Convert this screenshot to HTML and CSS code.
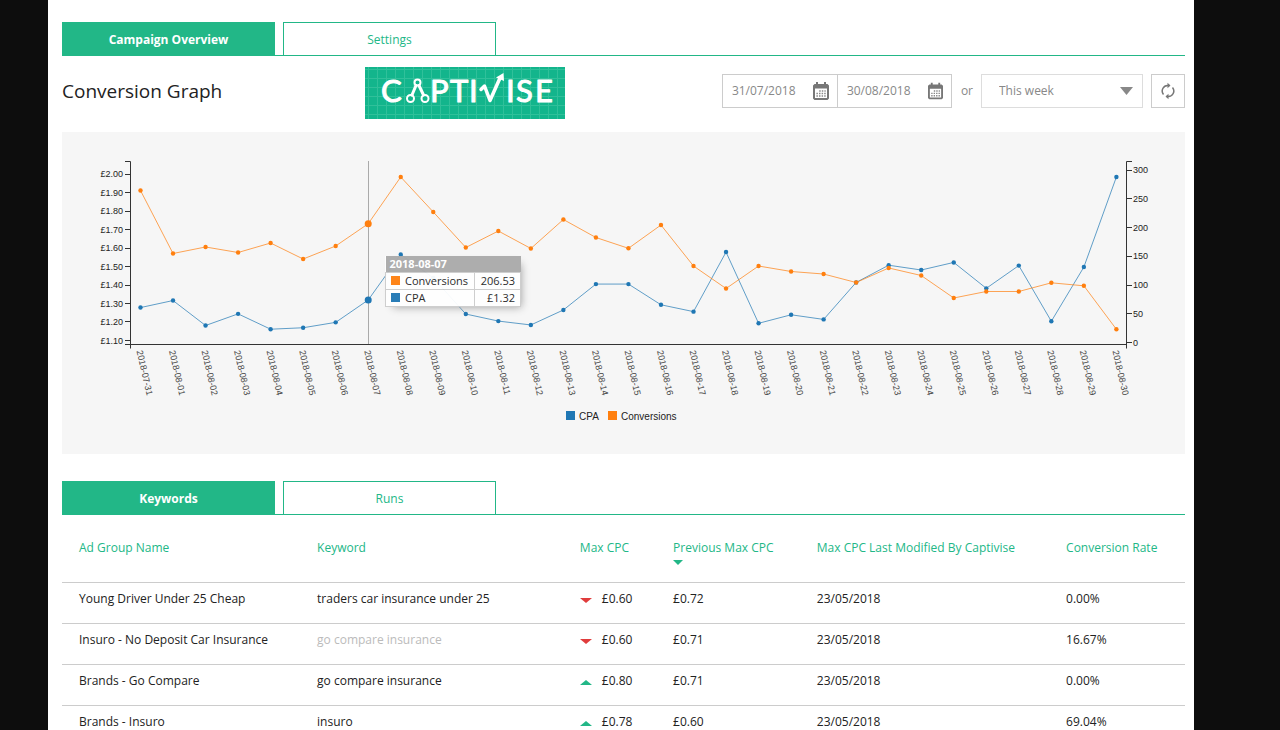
FILE: index.html
```html
<!DOCTYPE html>
<html lang="en">
  <head>
    <meta charset="UTF-8" />
    <meta name="viewport" content="width=device-width, initial-scale=1.0" />
    <title>Captivise - Campaign Overview</title>
    <link rel="stylesheet" href="styles.css">
  </head>
  <body>
    <main class="page">
      <nav class="tabs">
        <button class="tab active" type="button">Campaign Overview</button>
        <button class="tab" type="button">Settings</button>
      </nav>

      <header class="graph-header">
        <h1>Conversion Graph</h1>
        <svg class="logo" width="200" height="52" viewBox="0 0 200 52" role="img" aria-label="Captivise">
          <defs>
            <pattern id="grid" width="9" height="9" patternUnits="userSpaceOnUse">
              <path d="M3.500 0v9M0 2.500h9" stroke="#3cc4a0" stroke-width="1" fill="none" />
            </pattern>
          </defs>
          <rect width="200" height="52" fill="#13b58c" />
          <rect width="200" height="52" fill="url(#grid)" opacity="0.7" />
          <text class="logo-text" y="35" x="16 65 85 104 141 151 170">CPTIISE</text>
          <g fill="none" stroke="#fff" stroke-width="2" stroke-linecap="round" stroke-linejoin="round">
            <circle cx="52.5" cy="15.5" r="3" />
            <circle cx="45.5" cy="31.5" r="3.500" />
            <circle cx="60" cy="31.5" r="3.500" />
            <path d="M51 18.5L47 28M54 18.5L58.5 28" stroke-width="3" />
          </g>
          <path d="M116 22.500L119.500 19L125 33.500L135 11" fill="none" stroke="#fff" stroke-width="3.500" stroke-linecap="round" stroke-linejoin="round" />
          <path d="M131 10.500L138.500 6L139 14z" fill="#fff" />
        </svg>
        <form class="filters">
          <div class="date-range">
            <label class="date">
              <input type="text" value="31/07/2018" aria-label="Start date">
              <svg width="16" height="18" viewBox="0 0 16 18"><use href="#calendar" /></svg>
            </label>
            <label class="date">
              <input type="text" value="30/08/2018" aria-label="End date">
              <svg width="16" height="18" viewBox="0 0 16 18"><use href="#calendar" /></svg>
            </label>
          </div>
          <span class="or">or</span>
          <div class="period">
            <select aria-label="Period">
              <option>This week</option>
            </select>
            <svg width="13" height="8" viewBox="0 0 13 8"><path d="M0 0h13L6.500 8z" fill="#888" /></svg>
          </div>
          <button class="refresh" type="button" aria-label="Refresh">
            <svg width="14" height="18" viewBox="0 0 14 18" fill="none" stroke="#777" stroke-width="1.500">
              <path d="M2.500 12.500A5.500 5.500 0 0 1 7 3.500h1.500M11.500 5.500A5.500 5.500 0 0 1 7 14.500H5.500" />
              <path d="M6.500 .8L9.500 3.500L6.500 6.200zM7.500 11.800L4.500 14.500L7.500 17.200z" fill="#777" stroke="none" />
            </svg>
          </button>
        </form>
      </header>

      <section class="chart">
        <svg id="chart" viewBox="0 0 1123 322"></svg>
        <table class="tooltip">
          <thead>
            <tr><th colspan="2">2018-08-07</th></tr>
          </thead>
          <tbody>
            <tr><td><i class="swatch conversions"></i>Conversions</td><td class="value">206.53</td></tr>
            <tr><td><i class="swatch cpa"></i>CPA</td><td class="value">£1.32</td></tr>
          </tbody>
        </table>
      </section>

      <nav class="tabs">
        <button class="tab active" type="button">Keywords</button>
        <button class="tab" type="button">Runs</button>
      </nav>

      <table class="keywords">
        <colgroup>
          <col class="col-group">
          <col class="col-keyword">
          <col class="col-cpc">
          <col class="col-previous">
          <col class="col-modified">
          <col>
        </colgroup>
        <thead>
          <tr>
            <th>Ad Group Name</th>
            <th>Keyword</th>
            <th>Max CPC</th>
            <th>Previous Max CPC<i class="sort"></i></th>
            <th>Max CPC Last Modified By Captivise</th>
            <th>Conversion Rate</th>
          </tr>
        </thead>
        <tbody>
          <tr>
            <td>Young Driver Under 25 Cheap</td>
            <td>traders car insurance under 25</td>
            <td><i class="arrow down"></i>£0.60</td>
            <td>£0.72</td>
            <td>23/05/2018</td>
            <td>0.00%</td>
          </tr>
          <tr>
            <td>Insuro - No Deposit Car Insurance</td>
            <td class="paused">go compare insurance</td>
            <td><i class="arrow down"></i>£0.60</td>
            <td>£0.71</td>
            <td>23/05/2018</td>
            <td>16.67%</td>
          </tr>
          <tr>
            <td>Brands - Go Compare</td>
            <td>go compare insurance</td>
            <td><i class="arrow up"></i>£0.80</td>
            <td>£0.71</td>
            <td>23/05/2018</td>
            <td>0.00%</td>
          </tr>
          <tr>
            <td>Brands - Insuro</td>
            <td>insuro</td>
            <td><i class="arrow up"></i>£0.78</td>
            <td>£0.60</td>
            <td>23/05/2018</td>
            <td>69.04%</td>
          </tr>
        </tbody>
      </table>
    </main>

    <svg class="sprite" width="0" height="0">
      <symbol id="calendar" viewBox="0 0 16 18">
        <path d="M3 0h2v2h6V0h2v2h1.500L16 3.500v13L14.500 18h-13L0 16.500v-13L1.500 2H3zM2 6.500V16h12V6.500z" fill="#777" fill-rule="evenodd" />
        <path d="M6.200 9h6.500M3.400 11.500h9.300M3.400 14h9.300" stroke="#888" stroke-width="1.500" stroke-dasharray="1.500 1.100" />
      </symbol>
    </svg>

    <script>
      const conversions = [
        264.3, 154.8, 166.1, 156.5, 173, 145.2, 167.8, 206.53, 287.8, 227, 165.2,
        193.9, 163.5, 213.9, 182.6, 163.8, 204.3, 133, 93.9, 133, 123.5, 119.1,
        104.3, 129.6, 116.5, 77.4, 88.7, 88.7, 103.8, 98.6, 23,
      ];
      const cpa = [
        1.278, 1.316, 1.181, 1.244, 1.161, 1.169, 1.198, 1.319, 1.565, 1.438, 1.243,
        1.205, 1.184, 1.265, 1.405, 1.405, 1.293, 1.256, 1.578, 1.193, 1.239, 1.214,
        1.414, 1.507, 1.481, 1.522, 1.382, 1.505, 1.204, 1.497, 1.984,
      ];
      const selected = 7;

      const xPos = (i) => 78.5 + i * 32.53;
      const cpaY = (v) => 208.5 - (v - 1.1) * 185;
      const conversionsY = (v) => 210.5 - v * 0.575;

      function drawSeries(name, values, scale) {
        const points = values.map((v, i) => `${xPos(i)},${scale(v)}`).join(" ");
        const dots = values
          .map((v, i) => `<circle cx="${xPos(i)}" cy="${scale(v)}" r="${i === selected ? 3.5 : 2.2}" />`)
          .join("");
        return `<g class="series ${name}"><polyline points="${points}" />${dots}</g>`;
      }

      function drawAxes() {
        let out = `<path class="axis" d="M63 29.500h5.500v187M63 212.500h1001M1070 29.500h-5.500v187M1064 210.500h6" />`;
        for (let i = 0; i < 10; i++) {
          const y = cpaY(1.1 + i / 10);
          out += `<path class="axis" d="M63 ${Math.floor(y) + 0.5}h5" />`;
          out += `<text class="tick" x="61" y="${y + 3}" text-anchor="end">£${(1.1 + i / 10).toFixed(2)}</text>`;
        }
        for (let v = 0; v <= 300; v += 50) {
          const y = conversionsY(v);
          out += `<path class="axis" d="M1065 ${Math.floor(y) + 0.5}h5" />`;
          out += `<text class="tick" x="1071" y="${y + 3}">${v}</text>`;
        }
        for (let i = 0; i < conversions.length; i++) {
          const day = new Date(Date.UTC(2018, 6, 31 + i)).toISOString().slice(0, 10);
          out += `<text class="tick date-tick" transform="translate(${xPos(i) - 4} 219) rotate(77)">${day}</text>`;
        }
        return out;
      }

      function drawLegend() {
        return `<rect class="cpa" x="504" y="279" width="9" height="9" />
          <text class="legend" x="517" y="288">CPA</text>
          <rect class="conversions" x="546" y="279" width="9" height="9" />
          <text class="legend" x="559" y="288">Conversions</text>`;
      }

      document.getElementById("chart").innerHTML =
        drawAxes() +
        `<path class="focus" d="M306.500 29v183" />` +
        drawSeries("cpa", cpa, cpaY) +
        drawSeries("conversions", conversions, conversionsY) +
        drawLegend();
    </script>
  </body>
</html>
```
FILE: styles.css
```css
* {
  margin: 0;
  padding: 0;
  box-sizing: border-box;
}

body {
  background: #0d0d0d;
  color: #222;
  font-family: "Open Sans", sans-serif;
  font-size: 12px;
  line-height: 18px;
}

button,
input,
select {
  font: inherit;
}

.page {
  margin: 0 86px 0 48px;
  padding: 22px 9px 0 14px;
  min-height: 100vh;
  background: #fff;
}

.tabs {
  display: flex;
  gap: 8px;
  border-bottom: 1px solid #22b787;
}

.tab {
  width: 213px;
  height: 33px;
  padding-top: 2px;
  border: 1px solid #22b787;
  border-bottom: none;
  background: #fff;
  color: #22b787;
  cursor: pointer;
}

.tab.active {
  background: #22b787;
  color: #fff;
  font-weight: bold;
}

.graph-header {
  display: flex;
  align-items: flex-start;
  padding: 11px 0 13px;
}

.graph-header h1 {
  width: 303px;
  padding-top: 12px;
  font-size: 19px;
  font-weight: normal;
  line-height: 24px;
}

.logo-text {
  fill: #fff;
  stroke: #fff;
  stroke-linejoin: round;
  font-family: Lato, sans-serif;
  font-size: 31px;
}

.filters {
  display: flex;
  align-items: center;
  margin-left: auto;
  padding-top: 7px;
  color: #888;
}

.date-range {
  display: flex;
  border: 1px solid #ccc;
}

.date {
  display: flex;
  align-items: center;
  width: 114px;
  height: 32px;
  padding: 0 8px 0 9px;
}

.date + .date {
  border-left: 1px solid #ccc;
}

.date input {
  width: 81px;
  border: none;
  background: none;
  color: #888;
}

.or {
  padding: 0 8px 0 9px;
}

.period {
  position: relative;
}

.period select {
  width: 162px;
  height: 34px;
  padding-left: 17px;
  border: 1px solid #ddd;
  background: #fff;
  color: #888;
  appearance: none;
}

.period svg {
  position: absolute;
  top: 13px;
  right: 10px;
  pointer-events: none;
}

.refresh {
  display: flex;
  align-items: center;
  justify-content: center;
  width: 34px;
  height: 34px;
  margin-left: 8px;
  border: 1px solid #ccc;
  background: #fff;
}

.chart {
  position: relative;
  margin-bottom: 27px;
  background: #f6f6f6;
}

.chart > svg {
  display: block;
  width: 100%;
}

.axis {
  fill: none;
  stroke: #333;
}

.tick,
.legend {
  fill: #222;
  font-family: "Liberation Sans", Arial, sans-serif;
  font-size: 9px;
}

.date-tick {
  fill: #444;
}

.legend {
  font-size: 10px;
}

.focus {
  stroke: #aaa;
}

.cpa {
  fill: #1f77b4;
  stroke: #1f77b4;
}

.conversions {
  fill: #ff7f0e;
  stroke: #ff7f0e;
}

.series circle,
.chart rect {
  stroke: none;
}

.series polyline {
  fill: none;
  stroke-opacity: 0.7;
}

/* chart tooltip */
.tooltip {
  position: absolute;
  top: 124px;
  left: 323px;
  width: 136px;
  border-collapse: collapse;
  background: #fff;
  box-shadow: 4px 4px 8px -4px #999;
  font-size: 11px;
  line-height: 16px;
  opacity: 0.95;
}

.tooltip th {
  padding: 0 4px;
  background: #aaa;
  color: #fff;
  text-align: left;
}

.tooltip td {
  padding: 0 5px;
  border: 1px solid #ccc;
}

.tooltip .value {
  border-left: 1px dotted #999;
  text-align: right;
}

.swatch {
  display: inline-block;
  width: 9px;
  height: 9px;
  margin-right: 5px;
}

.swatch.cpa {
  background: #1f77b4;
}

.swatch.conversions {
  background: #ff7f0e;
}

/* keywords table */
.keywords {
  width: 100%;
  border-collapse: collapse;
  table-layout: fixed;
}

.col-group {
  width: 21.2%;
}

.col-keyword {
  width: 23.4%;
}

.col-cpc {
  width: 8.3%;
}

.col-previous {
  width: 12.8%;
}

.col-modified {
  width: 22.2%;
}

.keywords th,
.keywords td {
  padding-left: 17px;
  text-align: left;
  vertical-align: top;
  white-space: nowrap;
}

.keywords th {
  height: 67px;
  padding-top: 24px;
  color: #22b787;
  font-weight: normal;
}

.keywords td {
  height: 41px;
  padding-top: 7px;
  border-top: 1px solid #ccc;
}

.keywords .paused {
  color: #bbb;
}

.sort {
  display: block;
  width: 10px;
  margin-top: 3px;
  border: 5px solid transparent;
  border-top-color: #22b787;
  border-bottom: none;
}

.arrow {
  display: inline-block;
  margin-right: 10px;
  border: 6px solid transparent;
}

.arrow.down {
  border-top: 5px solid #e03c3c;
  border-bottom: none;
}

.arrow.up {
  border-bottom: 5px solid #22b787;
  border-top: none;
}

.sprite {
  position: absolute;
}
```
